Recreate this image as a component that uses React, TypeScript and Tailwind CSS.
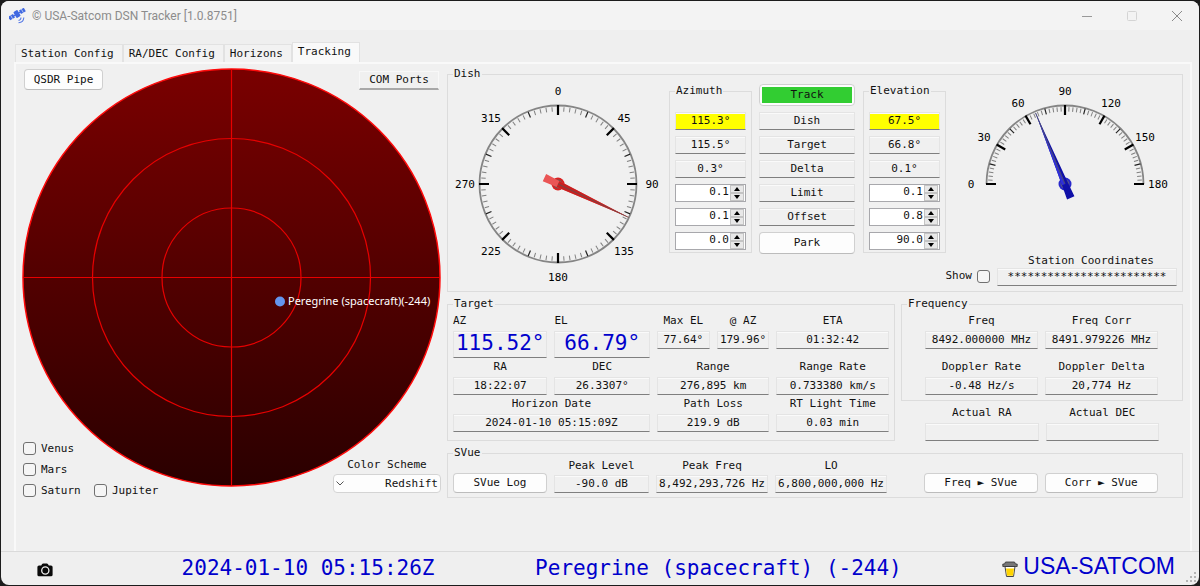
import { useId, useState } from 'react';
import type { ReactNode } from 'react';
import clsx from 'clsx';

interface ChildrenProps {
  children?: ReactNode;
  className?: string;
}

const PLANETS = ['Venus', 'Mars', 'Saturn', 'Jupiter'];
const TABS = ['Station Config', 'RA/DEC Config', 'Horizons', 'Tracking'];

/* ---------- Shared controls ---------- */

function GroupBox({ title, children, className }: ChildrenProps & { title: string }) {
  return (
    <fieldset className="min-w-0 border border-[#dcdcdc]">
      <legend className="ml-[5px] px-px leading-[14px]">{title}</legend>
      <div className={className}>{children}</div>
    </fieldset>
  );
}

function Readout({ children, className }: ChildrenProps) {
  return (
    <div
      className={clsx(
        'flex h-[18px] items-center justify-center border border-[#e4e4e4] border-b-[#7f7f7f] whitespace-nowrap shadow-[inset_0_1px_0_#fafafa]',
        className,
      )}
    >
      {children}
    </div>
  );
}

function LabeledReadout({ label, value }: { label: string; value?: string }) {
  return (
    <div className="flex min-w-0 flex-col gap-[3px] text-center">
      <span>{label}</span>
      <Readout>{value}</Readout>
    </div>
  );
}

function PushButton({ children, className }: ChildrenProps) {
  return (
    <button
      type="button"
      className={clsx('rounded border border-[#d0d0d0] border-b-[#bcbcbc] bg-[#fdfdfd] whitespace-nowrap', className)}
    >
      {children}
    </button>
  );
}

function CheckBox({ label, labelFirst }: { label: string; labelFirst?: boolean }) {
  return (
    <label className={clsx('flex items-center gap-[5px]', labelFirst && 'flex-row-reverse')}>
      <input
        type="checkbox"
        className="size-[13px] shrink-0 appearance-none rounded-[3px] border border-[#707070] bg-[#f5f5f5] checked:bg-[#0067c0]"
      />
      {label}
    </label>
  );
}

function Spinner({ label, initial }: { label: string; initial: number }) {
  const [value, setValue] = useState(initial.toFixed(1));
  const step = (delta: number) => setValue(((Number(value) || 0) + delta).toFixed(1));

  return (
    <div className="flex h-[18px] border border-[#a8a8ac] bg-white pr-px">
      <input
        type="text"
        inputMode="decimal"
        aria-label={label}
        value={value}
        onChange={(e) => setValue(e.target.value)}
        className="min-w-0 flex-1 bg-transparent pr-px pb-[3px] text-right outline-none"
      />
      <div className="flex w-[14px] flex-col bg-[#e8e8e8]">
        <button
          type="button"
          aria-label={`${label} up`}
          onClick={() => step(0.1)}
          className="flex flex-1 items-center justify-center border border-[#c4c4c4]"
        >
          <svg viewBox="0 0 6 4" className="h-[4px] w-[6px]"><path d="M3 0 6 4H0z" /></svg>
        </button>
        <button
          type="button"
          aria-label={`${label} down`}
          onClick={() => step(-0.1)}
          className="flex flex-1 items-center justify-center border border-[#c4c4c4]"
        >
          <svg viewBox="0 0 6 4" className="h-[4px] w-[6px]"><path d="M3 4 6 0H0z" /></svg>
        </button>
      </div>
    </div>
  );
}

/* ---------- Gauges ---------- */

interface Tick {
  angle: number;
  kind: 'major' | 'medium' | 'minor';
}

// Angles are in degrees clockwise from straight up
function buildTicks(start: number, end: number, step: number, major: number): Tick[] {
  const ticks: Tick[] = [];
  const count = Math.round((end - start) / step);
  for (let i = 0; i <= count; i++) {
    const offset = i * step;
    const kind = offset % major === 0 ? 'major' : offset % (major / 2) === 0 ? 'medium' : 'minor';
    ticks.push({ angle: start + offset, kind });
  }
  return ticks;
}

const TICK_STYLE = {
  major: { y1: -79, y2: -69, stroke: '#000', strokeWidth: 2.2 },
  medium: { y1: -78, y2: -72, stroke: '#222', strokeWidth: 1.2 },
  minor: { y1: -77, y2: -72.5, stroke: '#808080', strokeWidth: 1 },
};

function Ticks({ ticks }: { ticks: Tick[] }) {
  return (
    <>
      {ticks.map(({ angle, kind }) => (
        <line key={angle} x1="0" x2="0" {...TICK_STYLE[kind]} transform={`rotate(${angle})`} />
      ))}
    </>
  );
}

function Labels({ items }: { items: [string, number, number][] }) {
  return (
    <>
      {items.map(([text, x, y]) => (
        <text key={text} x={x} y={y + 4} textAnchor="middle" fontSize="11">{text}</text>
      ))}
    </>
  );
}

function AzimuthGauge({ value }: { value: number }) {
  return (
    <svg viewBox="-110 -103 221 206" className="h-[206px] w-[221px]">
      <circle r="78.5" fill="none" stroke="#858585" strokeWidth="1.8" />
      <Ticks ticks={buildTicks(0, 355.5, 4.5, 45)} />
      <Labels
        items={[
          ['0', 0, -93], ['45', 66, -66], ['90', 94, 0], ['135', 66, 67],
          ['180', 0, 93], ['225', -67, 67], ['270', -93, 0], ['315', -67, -66],
        ]}
      />
      <circle r="6.5" fill="#d92020" />
      <circle r="4.5" fill="#7a5050" />
      <g transform={`rotate(${value})`}>
        <path d="M0 -78 3.2 0 4 15H-4L-3.2 0z" fill="#ea5555" />
        <path d="M0 -78 3.2 0H-3.2z" fill="#c82020" />
        <path d="M0 -78V0" stroke="#7a4444" strokeWidth="1" />
      </g>
    </svg>
  );
}

function ElevationGauge({ value }: { value: number }) {
  return (
    <svg viewBox="-119 -103 236 134" className="h-[134px] w-[236px]">
      <path d="M-78.5 0A78.5 78.5 0 0 1 78.5 0" fill="none" stroke="#858585" strokeWidth="1.8" />
      <Ticks ticks={buildTicks(-90, 90, 3, 30)} />
      <Labels
        items={[
          ['0', -94, 0], ['30', -81, -47], ['60', -47, -81], ['90', 0, -93],
          ['120', 46, -81], ['150', 80, -47], ['180', 93, 0],
        ]}
      />
      <circle r="6.5" fill="#2828cc" />
      <circle r="4.500" fill="#55558a" />
      <g transform={`rotate(${value - 90})`}>
        <path d="M0 -77 3.2 0 4 15H-4L-3.2 0z" fill="#1010a8" />
        <path d="M0 -77 -3.2 0H0z" fill="#3030d8" />
        <path d="M0 -77V0" stroke="#4a4a78" strokeWidth="1" />
      </g>
    </svg>
  );
}

/* ---------- Sky plot ---------- */

function SkyPlot() {
  return (
    <svg viewBox="0 0 419 419" className="col-start-1 row-start-1 w-full">
      <defs>
        <linearGradient id="sky" x1="0" y1="0" x2="0" y2="1">
          <stop offset="0" stopColor="#7a0000" />
          <stop offset="1" stopColor="#2a0000" />
        </linearGradient>
      </defs>
      <circle cx="209.5" cy="209.5" r="208.5" fill="url(#sky)" stroke="#ff0a0a" strokeWidth="1.5" />
      <g fill="none" stroke="#e80000" strokeWidth="1.2">
        <circle cx="209.5" cy="209.5" r="139" />
        <circle cx="209.5" cy="209.5" r="69.5" />
        <path d="M209.5 1V418M1 209.5H418" />
      </g>
      <circle cx="258" cy="233.5" r="5" fill="#6495ed" />
      <text x="266" y="237" fontSize="11" fill="#fff" className="font-['Noto_Sans',sans-serif]">
        Peregrine (spacecraft)(-244)
      </text>
    </svg>
  );
}

function SkyPanel() {
  const schemeId = useId();
  return (
    <div className="grid content-start pt-px">
      <SkyPlot />
      <div className="col-start-1 row-start-1 flex items-start justify-between px-[2px] pt-px">
        <PushButton className="h-[21px] w-[79px]">QSDR Pipe</PushButton>
        <button
          type="button"
          className="mt-[2px] h-[19px] w-[80px] border border-[#f8f8f8] border-b-2 border-b-[#a8a8a8]"
        >
          COM Ports
        </button>
      </div>
      <div className="z-10 col-start-1 row-start-1 -mb-[11px] flex items-end justify-between self-end">
        <div className="grid grid-cols-[71px_auto] gap-y-[6px] pl-px leading-[15px]">
          {PLANETS.map((name) => (
            <div key={name} className={clsx(name !== 'Jupiter' && 'col-start-1')}>
              <CheckBox label={name} />
            </div>
          ))}
        </div>
        <div className="mb-[5px] flex w-[108px] flex-col gap-[2px]">
          <label htmlFor={schemeId} className="text-center">Color Scheme</label>
          <div className="relative">
            <select
              id={schemeId}
              className="h-[19px] w-full appearance-none rounded-sm border border-[#d4d4d4] bg-[#fdfdfd] pr-[2px] text-right [text-align-last:right]"
            >
              <option>Redshift</option>
            </select>
            <svg viewBox="0 0 8 5" className="pointer-events-none absolute top-[7px] left-[3px] h-[5px] w-[8px]">
              <path d="M.5 .5 4 4 7.5 .5" fill="none" stroke="#555" />
            </svg>
          </div>
        </div>
      </div>
    </div>
  );
}

/* ---------- Groups on the right ---------- */

interface AxisProps {
  title: string;
  readings: [string, string, string];
  settings: [number, number, number];
}

function AxisGroup({ title, readings, settings }: AxisProps) {
  return (
    <div className="w-[83px] pt-[3px]">
      <GroupBox title={title} className="flex flex-col gap-1.5 px-[5px] pt-[14px] pb-[2px]">
        {readings.map((reading, i) => (
          <Readout key={i} className={i === 0 ? 'bg-[#ffff00]' : undefined}>{reading}</Readout>
        ))}
        <Spinner label={`${title} Limit`} initial={settings[0]} />
        <Spinner label={`${title} Offset`} initial={settings[1]} />
        <Spinner label={`${title} Park`} initial={settings[2]} />
      </GroupBox>
    </div>
  );
}

function DishGroup() {
  return (
    <GroupBox title="Dish" className="flex justify-between pb-[4px]">
      <AzimuthGauge value={115.3} />
      <div className="flex flex-col">
        <div className="flex">
          <AxisGroup title="Azimuth" readings={['115.3°', '115.5°', '0.3°']} settings={[0.1, 0.1, 0]} />
          <div className="mr-2 ml-[7px] flex w-[96px] flex-col gap-1.5 pt-[3px]">
            <button type="button" className="h-[22px] rounded border border-[#d0d0d0] bg-[#fdfdfd] p-[2px]">
              <span className="flex h-full items-center justify-center bg-[#32cd32]">Track</span>
            </button>
            {['Dish', 'Target', 'Delta', 'Limit', 'Offset'].map((name) => (
              <Readout key={name}>{name}</Readout>
            ))}
            <PushButton className="h-[22px]">Park</PushButton>
          </div>
          <AxisGroup title="Elevation" readings={['67.5°', '66.8°', '0.1°']} settings={[0.1, 0.8, 90]} />
          <ElevationGauge value={67.5} />
        </div>
        <div className="flex items-end justify-end gap-[7px] pr-[5px]">
          <div className="mb-[3px]">
            <CheckBox label="Show" labelFirst />
          </div>
          <div className="w-[180px] text-center">
            <div className="ml-2">Station Coordinates</div>
            <Readout>{'*'.repeat(24)}</Readout>
          </div>
        </div>
      </div>
    </GroupBox>
  );
}

function BigReadout({ label, value }: { label: string; value: string }) {
  return (
    <div className="flex flex-col gap-[3px]">
      <span>{label}</span>
      <Readout className="h-[27px] pb-[3px] text-[21px] text-[#0000cc]">{value}</Readout>
    </div>
  );
}

function TargetGroup() {
  return (
    <GroupBox
      title="Target"
      className="grid grid-cols-[94fr_95fr_112fr_112fr] gap-x-[7px] gap-y-[2px] px-[5px] pt-[3px] pb-[5px]"
    >
      <BigReadout label="AZ" value="115.52°" />
      <BigReadout label="EL" value="66.79°" />
      <div className="grid grid-cols-2 gap-[7px]">
        <LabeledReadout label="Max EL" value="77.64°" />
        <LabeledReadout label="@ AZ" value="179.96°" />
      </div>
      <LabeledReadout label="ETA" value="01:32:42" />
      <LabeledReadout label="RA" value="18:22:07" />
      <LabeledReadout label="DEC" value="26.3307°" />
      <LabeledReadout label="Range" value="276,895 km" />
      <LabeledReadout label="Range Rate" value="0.733380 km/s" />
      <div className="col-span-2">
        <LabeledReadout label="Horizon Date" value="2024-01-10 05:15:09Z" />
      </div>
      <LabeledReadout label="Path Loss" value="219.9 dB" />
      <LabeledReadout label="RT Light Time" value="0.03 min" />
    </GroupBox>
  );
}

function FrequencyColumn() {
  return (
    <div className="flex flex-col gap-[5px]">
      <GroupBox
        title="Frequency"
        className="grid grid-cols-2 gap-x-[7px] gap-y-[11px] pt-[3px] pr-6 pb-[5px] pl-[23px]"
      >
        <LabeledReadout label="Freq" value="8492.000000 MHz" />
        <LabeledReadout label="Freq Corr" value="8491.979226 MHz" />
        <LabeledReadout label="Doppler Rate" value="-0.48 Hz/s" />
        <LabeledReadout label="Doppler Delta" value="20,774 Hz" />
      </GroupBox>
      <div className="grid grid-cols-2 gap-[7px] px-6">
        <LabeledReadout label="Actual RA" />
        <LabeledReadout label="Actual DEC" />
      </div>
    </div>
  );
}

function SVueGroup() {
  return (
    <GroupBox title="SVue" className="flex items-end justify-between pr-6 pb-[4px] pl-[5px]">
      <div className="grid w-[434px] grid-cols-[94fr_95fr_112fr_112fr] items-end gap-x-[7px] leading-3">
        <PushButton className="h-[20px]">SVue Log</PushButton>
        <LabeledReadout label="Peak Level" value="-90.0 dB" />
        <LabeledReadout label="Peak Freq" value="8,492,293,726 Hz" />
        <LabeledReadout label="LO" value="6,800,000,000 Hz" />
      </div>
      <div className="grid w-[234px] grid-cols-2 gap-[7px]">
        <PushButton className="h-[20px]">Freq ► SVue</PushButton>
        <PushButton className="h-[20px]">Corr ► SVue</PushButton>
      </div>
    </GroupBox>
  );
}

/* ---------- Window frame ---------- */

function SatelliteIcon() {
  return (
    <svg viewBox="0 0 18 16" className="h-4 w-[18px]">
      <g transform="rotate(-30 8 6)" fill="#4169e1">
        <rect x="-1" y="4" width="5.5" height="4" />
        <rect x="11.500" y="4" width="5.5" height="4" />
        <path d="M4 5.400h8v1.200H4z" />
        <rect x="5.600" y="2.500" width="4.800" height="7" rx="1" />
        <path d="M1.800 4v4M14.200 4v4" stroke="#f3f3f3" strokeWidth=".6" />
      </g>
      <g fill="none" stroke="#5a7ce6" strokeWidth="1.1">
        <path d="M9.5 12.5Q12 12 12 9.5" />
        <path d="M9.5 14.8Q14.6 14.4 14.8 9.5" />
      </g>
    </svg>
  );
}

function TitleBar() {
  return (
    <header className="flex h-[29px] items-center bg-[#f3f3f3] pl-2">
      <SatelliteIcon />
      <h1 className="ml-[5px] flex-1 font-[Roboto,sans-serif] text-xs text-[#8c8c8c]">
        © USA-Satcom DSN Tracker [1.0.8751]
      </h1>
      <div className="flex">
        <button type="button" aria-label="Minimize" className="flex h-[29px] w-[45px] items-center justify-center">
          <svg viewBox="0 0 10 10" className="size-[10px]"><path d="M0 5.5h10" stroke="#999" /></svg>
        </button>
        <button type="button" aria-label="Maximize" disabled className="flex h-[29px] w-[45px] items-center justify-center">
          <svg viewBox="0 0 10 10" className="size-[10px]">
            <rect x=".5" y=".5" width="9" height="9" rx="1" fill="none" stroke="#d4d4d4" />
          </svg>
        </button>
        <button type="button" aria-label="Close" className="flex h-[29px] w-[45px] items-center justify-center">
          <svg viewBox="0 0 10 10" className="size-[10px]"><path d="m0 0 10 10M10 0 0 10" stroke="#8a8a8a" /></svg>
        </button>
      </div>
    </header>
  );
}

function TabBar() {
  const [active, setActive] = useState('Tracking');
  return (
    <div role="tablist" className="flex items-end pt-3 pl-[14px]">
      {TABS.map((tab) => (
        <button
          key={tab}
          type="button"
          role="tab"
          aria-selected={tab === active}
          onClick={() => setActive(tab)}
          className={clsx(
            'border border-b-0 border-[#e2e2e2] pr-2 pl-[5px]',
            tab === active ? 'h-5 bg-[#f9f9f9] pb-[2px]' : 'h-[18px] bg-[#f2f2f2]',
          )}
        >
          {tab}
        </button>
      ))}
    </div>
  );
}

function CameraIcon() {
  return (
    <svg viewBox="0 0 16 14" className="h-[14px] w-4">
      <path
        d="M5 1.2Q5.4.5 6.2.5h3.6q.8 0 1.2.7l.8 1.3H14q1.6 0 1.6 1.6v7.6q0 1.6-1.6 1.6H2Q.4 13.3.4 11.7V4.1Q.4 2.5 2 2.5h2.2z"
        fill="#0a0a0a"
      />
      <circle cx="8.3" cy="7.5" r="3.6" fill="none" stroke="#f0f0f0" strokeWidth="1.3" />
    </svg>
  );
}

function CoffeeIcon() {
  return (
    <svg viewBox="0 0 16 16" className="size-4">
      <path d="M3 5.5h10l-1.5 10h-7z" fill="#fff" stroke="#444" strokeWidth="1" />
      <path d="M4 7.5h8l-1 7.3H5z" fill="#ffd400" />
      <path d="M3.5 1h9l1 2h1.700v2.500H.8V3h1.700z" fill="#777" stroke="#333" strokeWidth=".8" />
    </svg>
  );
}

function SizeGrip() {
  return (
    <svg viewBox="0 0 11 11" className="absolute right-[2px] bottom-[2px] size-[11px]" fill="#b4b4b4">
      <path d="M8 0h2v2H8zM8 4h2v2H8zM4 4h2v2H4zM8 8h2v2H8zM4 8h2v2H4zM0 8h2v2H0z" />
    </svg>
  );
}

function StatusBar() {
  return (
    <footer className="relative flex h-[34px] items-center justify-between border-t border-[#dadada] pr-6 pl-9 text-[21px] leading-none text-[#0000cc]">
      <button type="button" aria-label="Screenshot" className="pt-[2px]">
        <CameraIcon />
      </button>
      <span className="ml-7">2024-01-10 05:15:26Z</span>
      <span>Peregrine (spacecraft) (-244)</span>
      <a href="#" className="flex items-center gap-[5px] pb-1 font-['Liberation_Sans',sans-serif] text-[23px]">
        <span className="pt-1">
          <CoffeeIcon />
        </span>
        USA-SATCOM
      </a>
      <SizeGrip />
    </footer>
  );
}

export default function App() {
  return (
    <div className="flex min-h-screen bg-[#1c1c1c] p-px font-['DejaVu_Sans_Mono',monospace] text-[11px] leading-[14px] text-[#111]">
      <div className="flex min-w-0 flex-1 flex-col overflow-hidden rounded-lg bg-[#efefef]">
        <TitleBar />
        <TabBar />
        <main className="mr-[7px] ml-[13px] grid flex-1 grid-cols-[419fr_736fr] content-start gap-x-[6px] border-2 border-b-0 border-[#f9f9f9] bg-[#f0f0f0] pt-[3px] pr-[7px] pl-[6px]">
          <SkyPanel />
          <div className="flex min-w-0 flex-col gap-[5px]">
            <DishGroup />
            <div className="grid grid-cols-[448fr_282fr] gap-[6px]">
              <TargetGroup />
              <FrequencyColumn />
            </div>
            <SVueGroup />
          </div>
        </main>
        <StatusBar />
      </div>
    </div>
  );
}
